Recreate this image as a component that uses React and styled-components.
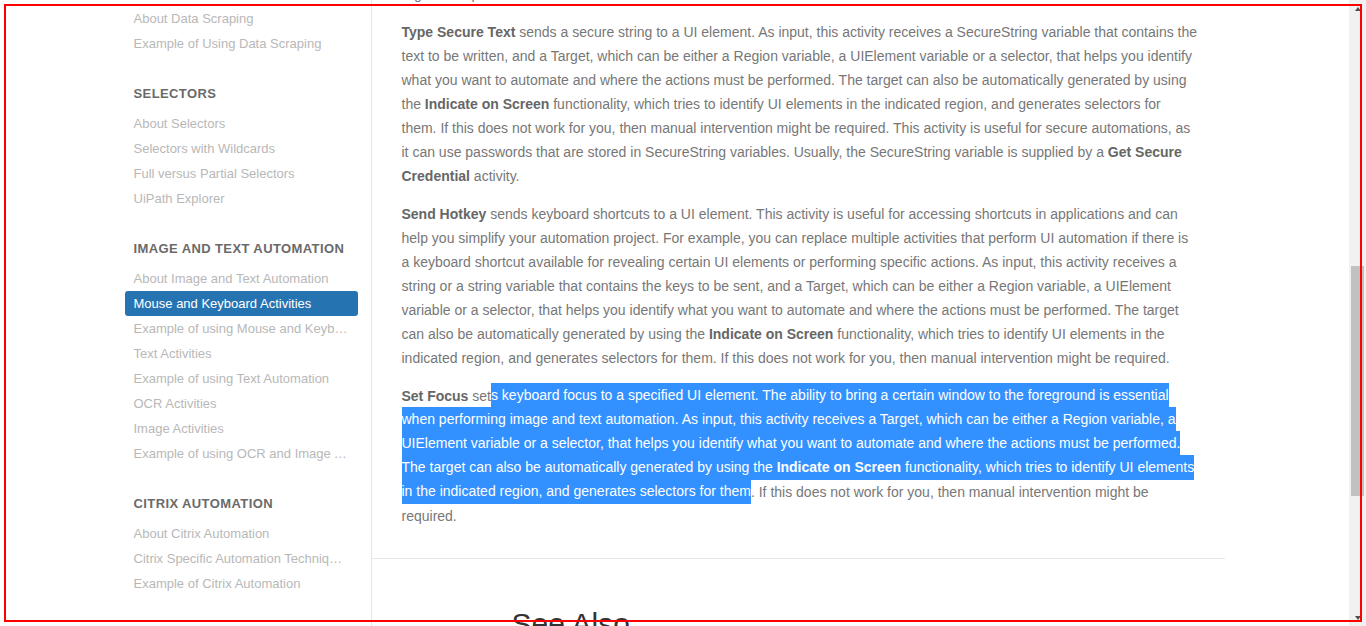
import React from 'react';
import styled, { createGlobalStyle } from 'styled-components';

const GlobalStyle = createGlobalStyle`
  html, body {
    margin: 0;
    padding: 0;
    overflow: hidden;
    background: #fff;
  }

  body {
    font-family: "Liberation Sans", Arial, sans-serif;
  }
`;

const Frame = styled.div`
  display: flex;
  height: 100vh;
  overflow: hidden;
`;

const Viewport = styled.div`
  flex: 1;
  overflow: hidden;
`;

const Container = styled.div`
  display: flex;
  width: 1100px;
  min-height: 100vh;
  margin: 0 auto;
`;

const Sidebar = styled.nav`
  flex: 0 0 247px;
  box-sizing: border-box;
  padding-top: 6px;
  border-right: 1px solid #e6e6e6;
`;

const NavGroup = styled.div`
  display: flex;
  flex-direction: column;
`;

const NavHeading = styled.h4`
  margin: 28px 0 7px;
  padding-left: 9px;
  height: 20px;
  line-height: 20px;
  font-size: 13px;
  font-weight: 700;
  letter-spacing: 0.4px;
  text-transform: uppercase;
  color: #6a6a6a;
`;

const NavItem = styled.a`
  display: block;
  box-sizing: border-box;
  width: 233px;
  height: 25px;
  padding: 0 9px;
  line-height: 25px;
  font-size: 13px;
  white-space: nowrap;
  overflow: hidden;
  text-overflow: ellipsis;
  border-radius: 3px;
  text-decoration: none;
  color: ${p => (p.$active ? '#fff' : '#b8b8b8')};
  background: ${p => (p.$active ? '#2673b2' : 'transparent')};
`;

const Content = styled.main`
  flex: 1;
  min-width: 0;
`;

const Article = styled.article`
  padding: 0 26px 16px 30px;
  border-bottom: 1px solid #e8e8e8;
`;

const Para = styled.p`
  margin: ${p => (p.$cut ? '-18.5px 0 14px' : '0 0 14px')};
  font-size: 14px;
  line-height: 24px;
  color: #777;

  b {
    color: #666;
  }
`;

const Selected = styled.span`
  background: #3391ff;
  color: #fff;
  padding: 4.2px 0;

  b {
    color: #fff;
  }
`;

const SeeAlso = styled.h2`
  margin: 48px 0 0;
  padding-left: 140px;
  font-size: 30px;
  font-weight: 400;
  line-height: normal;
  color: #333;
`;

const Scrollbar = styled.div`
  flex: 0 0 17px;
  display: flex;
  flex-direction: column;
  background: #f1f1f1;
`;

const ArrowButton = styled.div`
  height: 17px;
  display: flex;
  align-items: center;
  justify-content: center;

  &::after {
    content: '';
    width: 0;
    height: 0;
    border-left: 3.5px solid transparent;
    border-right: 3.5px solid transparent;
    ${p => (p.$down ? 'border-top: 4px solid #505050;' : 'border-bottom: 4px solid #505050;')}
  }
`;

const Track = styled.div`
  flex: 1;
`;

const Thumb = styled.div`
  margin: ${p => p.$offset}px 2px 0;
  height: ${p => p.$size}px;
  background: #c1c1c1;
`;

const Annotation = styled.div`
  position: fixed;
  top: 4px;
  left: 4px;
  width: 1358px;
  height: 618px;
  box-sizing: border-box;
  border: 2px solid #f00;
  pointer-events: none;
  z-index: 10;
`;

const groups = [
  {
    title: null,
    items: ['About Data Scraping', 'Example of Using Data Scraping']
  },
  {
    title: 'Selectors',
    items: ['About Selectors', 'Selectors with Wildcards', 'Full versus Partial Selectors', 'UiPath Explorer']
  },
  {
    title: 'Image and Text Automation',
    items: [
      'About Image and Text Automation',
      'Mouse and Keyboard Activities',
      'Example of using Mouse and Keyboard Activities',
      'Text Activities',
      'Example of using Text Automation',
      'OCR Activities',
      'Image Activities',
      'Example of using OCR and Image Automation'
    ]
  },
  {
    title: 'Citrix Automation',
    items: ['About Citrix Automation', 'Citrix Specific Automation Techniques', 'Example of Citrix Automation']
  }
];

const ACTIVE = 'Mouse and Keyboard Activities';

export default function App() {
  return (
    <>
      <GlobalStyle />
      <Frame>
        <Viewport>
          <Container>
            <Sidebar>
              {groups.map((group, i) => (
                <NavGroup key={i}>
                  {group.title && <NavHeading>{group.title}</NavHeading>}
                  {group.items.map(item => (
                    <NavItem key={item} href="#" $active={item === ACTIVE}>{item}</NavItem>
                  ))}
                </NavGroup>
              ))}
            </Sidebar>
            <Content>
              <Article>
                <Para $cut>region of a pattern matches.</Para>
                <Para>
                  <b>Type Secure Text</b> sends a secure string to a UI element. As input, this activity receives a SecureString variable that contains the text to be written, and a Target, which can be either a Region variable, a UIElement variable or a selector, that helps you identify what you want to automate and where the actions must be performed. The target can also be automatically generated by using the <b>Indicate on Screen</b> functionality, which tries to identify UI elements in the indicated region, and generates selectors for them. If this does not work for you, then manual intervention might be required. This activity is useful for secure automations, as it can use passwords that are stored in SecureString variables. Usually, the SecureString variable is supplied by a <b>Get Secure Credential</b> activity.
                </Para>
                <Para>
                  <b>Send Hotkey</b> sends keyboard shortcuts to a UI element. This activity is useful for accessing shortcuts in applications and can help you simplify your automation project. For example, you can replace multiple activities that perform UI automation if there is a keyboard shortcut available for revealing certain UI elements or performing specific actions. As input, this activity receives a string or a string variable that contains the keys to be sent, and a Target, which can be either a Region variable, a UIElement variable or a selector, that helps you identify what you want to automate and where the actions must be performed. The target can also be automatically generated by using the <b>Indicate on Screen</b> functionality, which tries to identify UI elements in the indicated region, and generates selectors for them. If this does not work for you, then manual intervention might be required.
                </Para>
                <Para>
                  <b>Set Focus</b> set<Selected>s keyboard focus to a specified UI element. The ability to bring a certain window to the foreground is essential when performing image and text automation. As input, this activity receives a Target, which can be either a Region variable, a UIElement variable or a selector, that helps you identify what you want to automate and where the actions must be performed. The target can also be automatically generated by using the <b>Indicate on Screen</b> functionality, which tries to identify UI elements in the indicated region, and generates selectors for them</Selected>. If this does not work for you, then manual intervention might be required.
                </Para>
              </Article>
              <SeeAlso>See Also</SeeAlso>
            </Content>
          </Container>
        </Viewport>
        <Scrollbar>
          <ArrowButton />
          <Track>
            <Thumb $offset={249} $size={230} />
          </Track>
          <ArrowButton $down />
        </Scrollbar>
      </Frame>
      <Annotation />
    </>
  );
}
